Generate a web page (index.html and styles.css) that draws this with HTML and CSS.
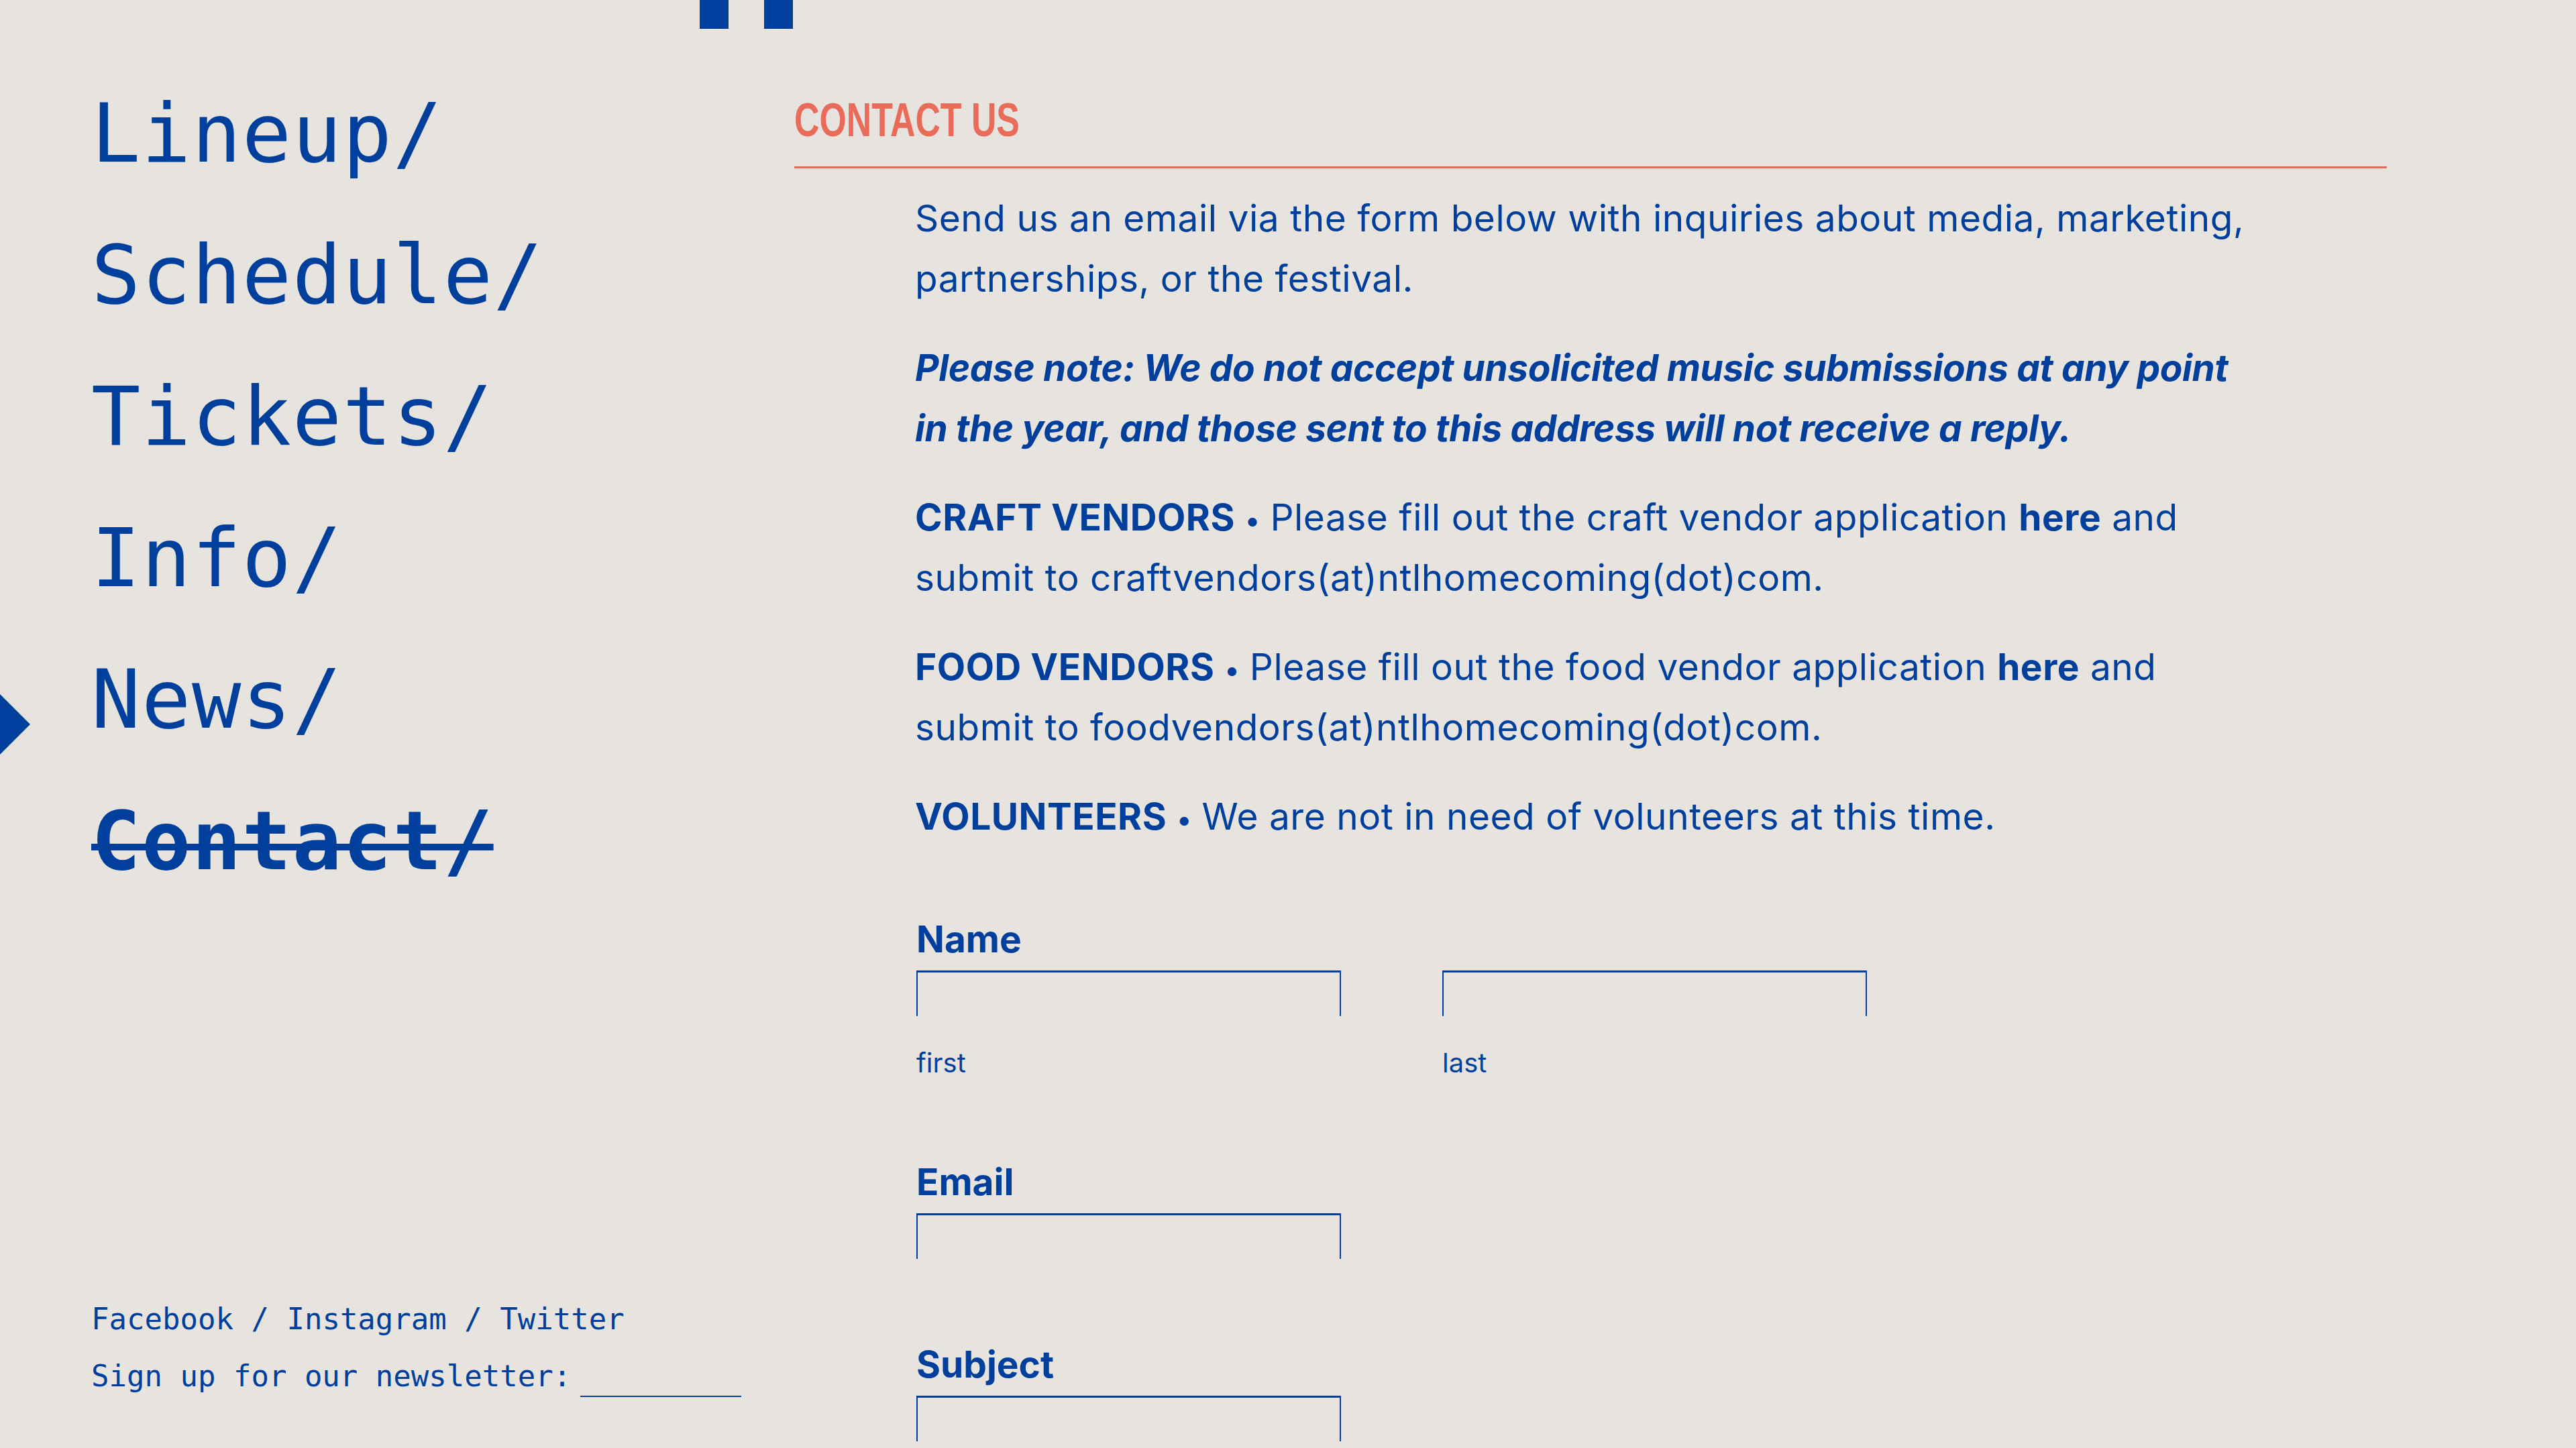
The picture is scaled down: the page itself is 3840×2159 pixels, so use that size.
FILE: index.html
```html
<!DOCTYPE html>
<html lang="en">
  <head>
    <meta charset="UTF-8" />
    <meta name="viewport" content="width=device-width, initial-scale=1.0" />
    <title>Contact Us</title>
    <link rel="stylesheet" href="styles.css">
  </head>
  <body>
    <div class="page">
      <aside class="sidebar">
        <div class="marks">
          <span class="mark"></span>
          <span class="mark"></span>
        </div>
        <nav class="menu">
          <a class="menu-item" href="#">Lineup/</a>
          <a class="menu-item" href="#">Schedule/</a>
          <a class="menu-item" href="#">Tickets/</a>
          <a class="menu-item" href="#">Info/</a>
          <a class="menu-item pointer" href="#">News/</a>
          <a class="menu-item current" href="#">Contact/</a>
        </nav>
        <footer class="sidebar-footer">
          <p class="social">
            <a href="#">Facebook</a> / <a href="#">Instagram</a> / <a href="#">Twitter</a>
          </p>
          <p class="newsletter">Sign up for our newsletter:<input class="newsletter-input" type="email" /></p>
        </footer>
      </aside>

      <main class="content">
        <h1 class="section-title"><span class="section-title-text">Contact Us</span></h1>

        <div class="copy">
          <p>Send us an email via the form below with inquiries about media, marketing, partnerships, or the festival.</p>
          <p class="note">Please note: We do not accept unsolicited music submissions at any point in the year, and those sent to this address will not receive a reply.</p>
          <p><strong>CRAFT VENDORS</strong> <span class="sep">&bull;</span> Please fill out the craft vendor application <strong>here</strong> and submit to craftvendors(at)ntlhomecoming(dot)com.</p>
          <p><strong>FOOD VENDORS</strong> <span class="sep">&bull;</span> Please fill out the food vendor application <strong>here</strong> and submit to foodvendors(at)ntlhomecoming(dot)com.</p>
          <p><strong>VOLUNTEERS</strong> <span class="sep">&bull;</span> We are not in need of volunteers at this time.</p>
        </div>

        <form class="contact-form">
          <div class="field">
            <label class="field-label">Name</label>
            <div class="name-row">
              <div class="sub-field">
                <input class="text-input" type="text" />
                <span class="sub-label">first</span>
              </div>
              <div class="sub-field">
                <input class="text-input" type="text" />
                <span class="sub-label">last</span>
              </div>
            </div>
          </div>
          <div class="field">
            <label class="field-label">Email</label>
            <input class="text-input" type="email" />
          </div>
          <div class="field subject">
            <label class="field-label">Subject</label>
            <input class="text-input" type="text" />
          </div>
        </form>
      </main>
    </div>
  </body>
</html>
```

FILE: styles.css
```css
body {
  margin: 0;
  padding: 0;
  background: #e7e4df;
  color: #003f9b;
  font-family: Inter, Roboto, "Liberation Sans", sans-serif;
  overflow: hidden;
}

a {
  color: inherit;
  text-decoration: none;
}

.page {
  display: grid;
  grid-template-columns: 1184px 2374px;
  height: 100vh;
  overflow: hidden;
}

/* left column */
.sidebar {
  display: flex;
  flex-direction: column;
  height: 100vh;
  font-family: "DejaVu Sans Mono", "Liberation Mono", monospace;
}

.marks {
  display: flex;
  gap: 53px;
  padding-left: 1043px;
  height: 43px;
}

.mark {
  width: 43px;
  height: 43px;
  background: #003f9b;
}

.menu {
  display: flex;
  flex-direction: column;
  margin-top: 51px;
  padding-left: 136px;
}

.menu-item {
  position: relative;
  font-size: 122px;
  line-height: 211px;
  letter-spacing: 1.5px;
  width: max-content;
}

.menu-item.pointer::before {
  content: "";
  position: absolute;
  left: -136px;
  top: 97px;
  border-top: 45px solid transparent;
  border-bottom: 45px solid transparent;
  border-left: 45px solid #003f9b;
}

.menu-item.current {
  font-weight: bold;
  text-decoration: underline;
  text-decoration-thickness: 10px;
  text-underline-offset: -38px;
  text-decoration-skip-ink: none;
}

.sidebar-footer {
  margin-top: auto;
  padding: 0 0 65px 136px;
  font-size: 44px;
  line-height: 85px;
}

.sidebar-footer p {
  margin: 0;
}

.newsletter-input {
  width: 240px;
  height: 36px;
  margin-left: 14px;
  padding: 0;
  border: none;
  border-bottom: 2px solid #003f9b;
  background: transparent;
  vertical-align: baseline;
}

/* right column */
.content {
  padding-top: 143px;
}

.section-title {
  margin: 0;
  padding-bottom: 34px;
  border-bottom: 3px solid #e96b5a;
  color: #e96b5a;
  font-family: "Liberation Sans", sans-serif;
  font-weight: bold;
  font-size: 71px;
  line-height: 71px;
  text-transform: uppercase;
}

.section-title-text {
  display: inline-block;
  transform: scaleX(0.73);
  transform-origin: left center;
}

.copy {
  margin-top: 29px;
  padding: 0 190px 0 180px;
  font-size: 55px;
  line-height: 90px;
  letter-spacing: 0.5px;
}

.copy p {
  margin: 0 0 43px;
}

.copy strong {
  font-weight: bold;
}

.sep {
  font-size: 42px;
  font-weight: bold;
  line-height: 1;
}

.note {
  font-style: italic;
  font-weight: bold;
  letter-spacing: -0.4px;
}

.contact-form {
  padding-left: 182px;
  margin-top: 93px;
}

.field {
  display: flex;
  flex-direction: column;
  align-items: flex-start;
  margin-bottom: 102px;
}

.field.subject {
  margin-top: 112px;
}

.field-label {
  font-size: 55px;
  font-weight: bold;
  line-height: 90px;
  margin-bottom: 2px;
}

.name-row {
  display: flex;
  gap: 151px;
}

.sub-field {
  display: flex;
  flex-direction: column;
}

.text-input {
  box-sizing: border-box;
  width: 633px;
  height: 68px;
  border: 2px solid #003f9b;
  border-top-width: 3px;
  border-bottom: none;
  background: transparent;
}

.sub-label {
  margin-top: 40px;
  font-size: 40px;
  line-height: 60px;
}
```
